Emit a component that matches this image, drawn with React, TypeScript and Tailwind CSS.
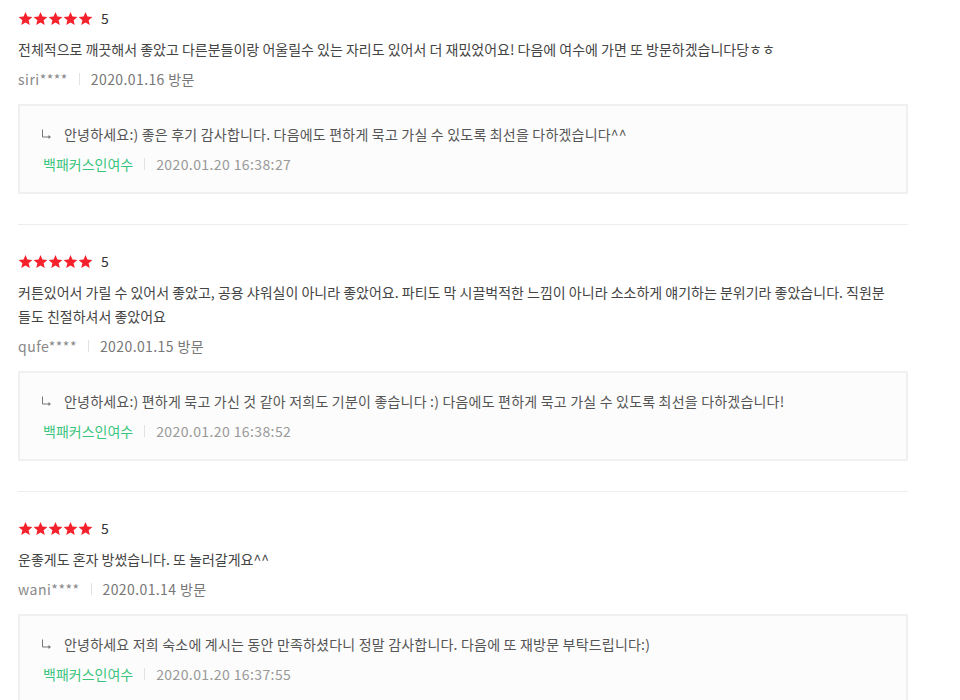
import type { ReactNode } from 'react';

interface Reply {
  author: string;
  text: string;
  createdAt: string;
}

interface Review {
  id: number;
  rating: number;
  text: string;
  user: string;
  visitedAt: string;
  reply: Reply;
}

const reviews: Review[] = [
  {
    id: 1,
    rating: 5,
    text: '전체적으로 깨끗해서 좋았고 다른분들이랑 어울릴수 있는 자리도 있어서 더 재밌었어요! 다음에 여수에 가면 또 방문하겠습니다당ㅎㅎ',
    user: 'siri****',
    visitedAt: '2020.01.16',
    reply: {
      author: '백패커스인여수',
      text: '안녕하세요:) 좋은 후기 감사합니다. 다음에도 편하게 묵고 가실 수 있도록 최선을 다하겠습니다^^',
      createdAt: '2020.01.20 16:38:27',
    },
  },
  {
    id: 2,
    rating: 5,
    text: '커튼있어서 가릴 수 있어서 좋았고, 공용 샤워실이 아니라 좋았어요. 파티도 막 시끌벅적한 느낌이 아니라 소소하게 얘기하는 분위기라 좋았습니다. 직원분들도 친절하셔서 좋았어요',
    user: 'qufe****',
    visitedAt: '2020.01.15',
    reply: {
      author: '백패커스인여수',
      text: '안녕하세요:) 편하게 묵고 가신 것 같아 저희도 기분이 좋습니다 :) 다음에도 편하게 묵고 가실 수 있도록 최선을 다하겠습니다!',
      createdAt: '2020.01.20 16:38:52',
    },
  },
  {
    id: 3,
    rating: 5,
    text: '운좋게도 혼자 방썼습니다. 또 놀러갈게요^^',
    user: 'wani****',
    visitedAt: '2020.01.14',
    reply: {
      author: '백패커스인여수',
      text: '안녕하세요 저희 숙소에 계시는 동안 만족하셨다니 정말 감사합니다. 다음에 또 재방문 부탁드립니다:)',
      createdAt: '2020.01.20 16:37:55',
    },
  },
];

function Star() {
  return (
    <svg width="15" height="15" viewBox="0 0 24 24" className="shrink-0">
      <path
        d="M12 1.6l3.1 7.3 7.9.7-6 5.2 1.8 7.7L12 18.4l-6.8 4.1L7 14.8 1 9.6l7.9-.7z"
        fill="#f5222d"
      />
    </svg>
  );
}

function ReplyArrow() {
  return (
    <svg width="11" height="10" viewBox="0 0 11 10" className="shrink-0">
      <path d="M1.5 0.5v7.5h7" stroke="#777" strokeWidth="1" fill="none" />
      <path d="M7.5 6l2.5 2-2.5 2z" fill="#777" />
    </svg>
  );
}

function Divider({ children }: { children?: ReactNode }) {
  return <span className="mx-[11px] inline-block h-[12px] w-px bg-[#e2e2e2] align-middle">{children}</span>;
}

function ReviewItem({ review, last }: { review: Review; last: boolean }) {
  return (
    <div className={`pt-[26px] ${last ? '' : 'pb-[30px] border-b border-[#eeeeee]'}`}>
      <div className="flex h-[20px] items-center">
        <div className="flex">
          {Array.from({ length: review.rating }).map((_, i) => (
            <Star key={i} />
          ))}
        </div>
        <span className="ml-[8px] text-[14px] leading-[20px] text-[#333]">{review.rating}</span>
      </div>

      <p className="mt-[9px] pr-[14px] text-[14px] leading-[24px] text-[#444]">{review.text}</p>

      <div className="mt-[6px] flex items-center text-[14px] leading-[24px] text-[#888]">
        <span className="tracking-[0.5px]">{review.user}</span>
        <Divider />
        <span className="tracking-[0.4px] text-[#777]">{review.visitedAt} 방문</span>
      </div>

      <div className="mt-[13px] border-2 border-[#f0f0f0] bg-[#fcfcfc] pl-[21px] pr-4 pt-[16px] pb-[16px]">
        <div className="flex items-center text-[14px] leading-[24px] text-[#555]">
          <ReplyArrow />
          <span className="ml-[12px] tracking-[0.2px]">{review.reply.text}</span>
        </div>
        <div className="mt-[6px] flex items-center pl-[2px] text-[14px] leading-[24px]">
          <span className="text-[#3ac57c]">{review.reply.author}</span>
          <Divider />
          <span className="tracking-[0.4px] text-[#999]">{review.reply.createdAt}</span>
        </div>
      </div>
    </div>
  );
}

export default function App() {
  return (
    <div
      className="min-h-screen bg-white"
      style={{ fontFamily: '"Noto Sans CJK KR", "Noto Sans", sans-serif' }}
    >
      <div className="w-[890px] ml-[18px] -mt-[18px]">
        {reviews.map((review, i) => (
          <ReviewItem key={review.id} review={review} last={i === reviews.length - 1} />
        ))}
      </div>
    </div>
  );
}
